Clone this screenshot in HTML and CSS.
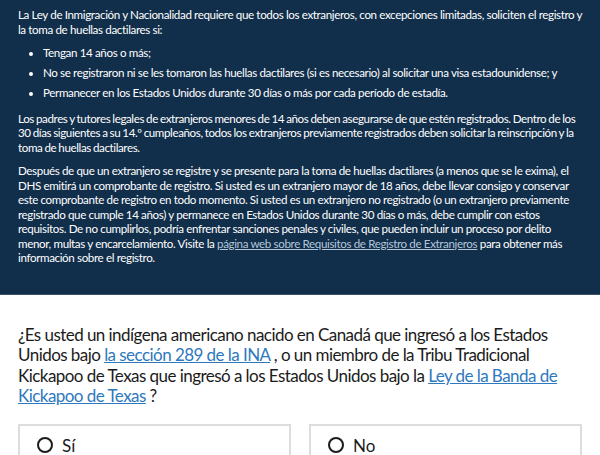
FILE: index.html
```html
<!DOCTYPE html>
<html lang="es">
<head>
<meta charset="utf-8">
<link rel="stylesheet" href="styles.css">
</head>
<body>
<section class="panel">
  <p>La Ley de Inmigración y Nacionalidad requiere que todos los extranjeros, con excepciones limitadas, soliciten el registro y la toma de huellas dactilares si:</p>
  <ul>
    <li>Tengan 14 años o más;</li>
    <li>No se registraron ni se les tomaron las huellas dactilares (si es necesario) al solicitar una visa estadounidense; y</li>
    <li>Permanecer en los Estados Unidos durante 30 días o más por cada período de estadía.</li>
  </ul>
  <p class="tight">Los padres y tutores legales de extranjeros menores de 14 años deben asegurarse de que estén registrados. Dentro de los 30 días siguientes a su 14.º cumpleaños, todos los extranjeros previamente registrados deben solicitar la reinscripción y la toma de huellas dactilares.</p>
  <p>Después de que un extranjero se registre y se presente para la toma de huellas dactilares (a menos que se le exima), el DHS emitirá un comprobante de registro. Si usted es un extranjero mayor de 18 años, debe llevar consigo y conservar este comprobante de registro en todo momento. Si usted es un extranjero no registrado (o un extranjero previamente registrado que cumple 14 años) y permanece en Estados Unidos durante 30 días o más, debe cumplir con estos requisitos. De no cumplirlos, podría enfrentar sanciones penales y civiles, que pueden incluir un proceso por delito menor, multas y encarcelamiento. Visite la <a href="#">página web sobre Requisitos de Registro de Extranjeros</a> para obtener más información sobre el registro.</p>
</section>
<section class="question">
  <p class="q">¿Es usted un indígena americano nacido en Canadá que ingresó a los Estados Unidos bajo <a href="#">la sección 289 de la INA</a> , o un miembro de la Tribu Tradicional Kickapoo de Texas que ingresó a los Estados Unidos bajo la <a href="#">Ley de la Banda de Kickapoo de Texas</a> ?</p>
  <div class="options">
    <label class="opt"><span class="radio"></span><span class="lbl">Sí</span></label>
    <label class="opt"><span class="radio"></span><span class="lbl">No</span></label>
  </div>
</section>
</body>
</html>
```

FILE: styles.css
```css
html, body {
  margin: 0;
  padding: 0;
  background: #ffffff;
}
body {
  font-family: Lato, "Open Sans", sans-serif;
}
.panel {
  background: #112e4a;
  color: #ffffff;
  padding: 8px 18px 28px 18px;
  border-bottom: 1px solid #3b5168;
  font-size: 11.6px;
  line-height: 14.5px;
  letter-spacing: -0.37px;
}
.panel p {
  margin: 0 0 9px 0;
}
.panel p.tight {
  letter-spacing: -0.4px;
  word-spacing: -0.5px;
}
.panel p:last-child {
  margin-bottom: 0;
}
.panel ul {
  margin: 8px 0 11px 0;
  padding-left: 25px;
}
.panel li {
  margin-bottom: 5.5px;
}
.panel li:last-child {
  margin-bottom: 0;
}
.panel a {
  color: #b4c6da;
  text-decoration: underline;
}
.question {
  padding: 30px 18px 0 18px;
  color: #1b1b1b;
}
.q {
  margin: 0;
  font-size: 17px;
  line-height: 20.5px;
  letter-spacing: -0.55px;
}
.q a {
  color: #2e78bd;
}
.options {
  display: grid;
  grid-template-columns: 1fr 1fr;
  gap: 18px;
  margin-top: 17px;
}
.opt {
  display: flex;
  align-items: center;
  gap: 9px;
  border: 2px solid #dcdddf;
  border-bottom: none;
  padding: 9px 16px 10px 17px;
  font-size: 17px;
  color: #1b1b1b;
}
.radio {
  width: 12px;
  height: 12px;
  border: 2px solid #1b1b1b;
  border-radius: 50%;
}
```
